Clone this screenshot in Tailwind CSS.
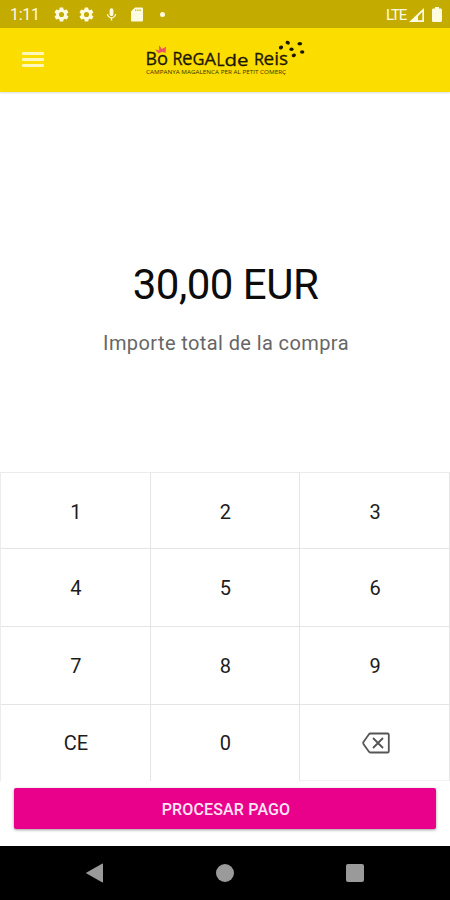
<!DOCTYPE html>
<html lang="ca">

<head>
  <meta charset="UTF-8">
  <meta name="viewport" content="width=device-width, initial-scale=1.0">
  <title>Bo Regal de Reis</title>
  <script src="https://cdn.jsdelivr.net/npm/@tailwindcss/browser@4"></script>
</head>

<body class="overflow-hidden bg-white font-['Roboto',sans-serif]">
  <div class="w-[450px] h-[900px] flex flex-col">

    <!-- status bar -->
    <div class="h-7 shrink-0 bg-[#c3ab00] flex items-center justify-between pl-[10px] pr-2 text-[#fffbe0]">
      <div class="flex items-center">
        <span class="w-[43px] pt-0.5 text-base leading-none tracking-[-0.3px]">1:11</span>
        <svg class="w-[17px] h-[17px] mt-px" viewBox="0 0 24 24" fill="currentColor">
          <path d="M19.4 13c0-.3.1-.6.1-1s0-.7-.1-1l2.1-1.6c.2-.2.3-.4.1-.7l-2-3.4c-.1-.2-.4-.3-.6-.2l-2.5 1c-.5-.4-1.1-.7-1.7-1l-.4-2.6c0-.3-.2-.5-.5-.5h-4c-.2 0-.4.2-.5.4l-.4 2.7c-.6.2-1.1.6-1.7 1l-2.400-1c-.2-.1-.5 0-.6.2l-2 3.400c-.1.200-.1.500.1.700L4.500 11c0 .300-.1.700-.1 1s0 .700.100 1l-2.100 1.600c-.2.200-.2.400-.1.700l2 3.400c.1.200.400.300.600.200l2.500-1c.5.400 1.100.700 1.700 1l.4 2.600c0 .300.300.500.500.500h4c.3 0 .5-.2.500-.5l.4-2.600c.6-.3 1.200-.6 1.700-1l2.500 1c.2.100.5 0 .6-.2l2-3.400c.1-.2.100-.5-.1-.7zM12 15.600a3.600 3.600 0 1 1 0-7.200 3.600 3.600 0 0 1 0 7.200z" />
        </svg>
        <svg class="w-[17px] h-[17px] mt-px ml-[8px]" viewBox="0 0 24 24" fill="currentColor">
          <path d="M19.4 13c0-.3.1-.6.1-1s0-.7-.1-1l2.1-1.6c.2-.2.3-.4.1-.7l-2-3.4c-.1-.2-.4-.3-.6-.2l-2.5 1c-.5-.4-1.1-.7-1.7-1l-.4-2.6c0-.3-.2-.5-.5-.5h-4c-.2 0-.4.2-.5.4l-.4 2.7c-.6.2-1.1.6-1.7 1l-2.400-1c-.2-.1-.5 0-.6.2l-2 3.400c-.1.200-.1.500.1.700L4.500 11c0 .300-.1.700-.1 1s0 .700.100 1l-2.100 1.600c-.2.200-.2.400-.1.700l2 3.400c.1.200.400.300.600.200l2.500-1c.5.400 1.100.700 1.700 1l.4 2.600c0 .300.300.500.500.500h4c.3 0 .5-.2.500-.5l.4-2.600c.6-.3 1.200-.6 1.700-1l2.500 1c.2.100.5 0 .6-.2l2-3.400c.1-.2.100-.5-.1-.7zM12 15.600a3.600 3.600 0 1 1 0-7.200 3.600 3.600 0 0 1 0 7.200z" />
        </svg>
        <svg class="w-[15px] h-[15px] mt-px ml-[9px]" viewBox="0 0 24 24" fill="currentColor">
          <path d="M12 14.500a3 3 0 0 0 3-3V5a3 3 0 0 0-6 0v6.500a3 3 0 0 0 3 3zm5.500-3.500c0 3-2.500 5.200-5.500 5.200S6.500 14 6.500 11H4.600c0 3.600 2.700 6.300 6.200 6.800V21.500h2.400v-3.700c3.500-.5 6.200-3.200 6.200-6.800z" />
        </svg>
        <svg class="w-3 h-[15px] ml-3" viewBox="0 0 12 15" fill="currentColor">
          <path fill-rule="evenodd" d="M4 .5h6.700c.8 0 1.300.5 1.300 1.300v11.400c0 .8-.5 1.300-1.300 1.300H1.300C.5 14.500 0 14 0 13.200V4.500zM4.200 2.600v1.300h1.100V2.600zM6.400 2.600v1.300h1.100V2.600zM8.600 2.600v1.300h1.100V2.600z" />
        </svg>
        <span class="size-[5px] rounded-full bg-current ml-[17px]"></span>
      </div>
      <div class="flex items-center">
        <span class="text-[15px] leading-none pt-0.5 tracking-[-1.2px]">LTE</span>
        <svg class="w-[15px] h-[14px] ml-[3px] mt-px" viewBox="0 0 15 14" fill="currentColor">
          <path fill-rule="evenodd" d="M15 0v14H0zM13.300 4v8.300H9V8.200z" />
        </svg>
        <svg class="w-[10px] h-[15px] ml-2" viewBox="0 0 10 15" fill="currentColor">
          <path d="M3 0h4v1.500h1.500C9.400 1.500 10 2.100 10 3v10.500c0 .9-.6 1.500-1.500 1.500h-7C.6 15 0 14.400 0 13.500V3c0-.9.6-1.500 1.500-1.500H3z" />
        </svg>
      </div>
    </div>

    <!-- app bar -->
    <header class="h-16 shrink-0 bg-[#fbdd00] flex items-start shadow-[0_1px_2px_rgba(0,0,0,0.15)]">
      <button class="ml-[22px] mt-6 w-[22px] flex flex-col gap-[3px]">
        <span class="h-[3px] w-full rounded-[1px] bg-[#fff8bc]"></span>
        <span class="h-[3px] w-full rounded-[1px] bg-[#fff8bc]"></span>
        <span class="h-[3px] w-full rounded-[1px] bg-[#fff8bc]"></span>
      </button>
      <svg class="ml-[100px] mt-2 w-[164px] h-[42px]" viewBox="144 36 164 42" fill="#1c1800">
        <g font-family="'Open Sans', sans-serif" stroke="#1c1800" stroke-width=".3">
          <text x="145.500" y="65" font-size="18" textLength="11.500" lengthAdjust="spacingAndGlyphs">B</text>
          <text x="157" y="65" font-size="19" textLength="11" lengthAdjust="spacingAndGlyphs">o</text>
          <text x="172.500" y="65" font-size="17.500" textLength="10" lengthAdjust="spacingAndGlyphs">R</text>
          <text x="182" y="65" font-size="20" textLength="10.500" lengthAdjust="spacingAndGlyphs">e</text>
          <text x="192.500" y="65" font-size="17" textLength="12" lengthAdjust="spacingAndGlyphs">G</text>
          <text x="204.500" y="65" font-size="16" textLength="11.500" lengthAdjust="spacingAndGlyphs">A</text>
          <text x="216.500" y="66" font-size="18" textLength="8" lengthAdjust="spacingAndGlyphs">L</text>
          <text x="224.500" y="65.500" font-size="17" textLength="24" lengthAdjust="spacingAndGlyphs">de</text>
          <text x="254" y="65" font-size="17" textLength="10" lengthAdjust="spacingAndGlyphs">R</text>
          <text x="263.500" y="65" font-size="18.500" textLength="24.500" lengthAdjust="spacingAndGlyphs">eis</text>
        </g>
        <text x="146" y="73.800" fill="#3a3300" font-family="'Open Sans', sans-serif" font-size="5" textLength="140" lengthAdjust="spacingAndGlyphs">CAMPANYA MAGALENCA PER AL PETIT COMERÇ</text>
        <!-- crown over the o -->
        <path fill="#ee5368" d="M158.500 53.300 155 49.500l4.200 1-.2-5.300 3 3.800 4-2.300-.4 6.300-3.300-1.200z" />
        <!-- confetti -->
        <ellipse cx="281" cy="47.500" rx="2.200" ry="1.800" transform="rotate(-25 281 47.500)" />
        <ellipse cx="287.700" cy="42.700" rx="2.200" ry="1.800" transform="rotate(25 287.700 42.700)" />
        <ellipse cx="291.500" cy="49.200" rx="2.100" ry="1.800" />
        <ellipse cx="293.800" cy="55.400" rx="2.200" ry="1.800" transform="rotate(-25 293.800 55.400)" />
        <ellipse cx="299.800" cy="43.800" rx="2.400" ry="1.700" />
        <ellipse cx="302.200" cy="52" rx="2.200" ry="1.700" />
      </svg>
    </header>

    <!-- amount -->
    <main class="h-[380px] shrink-0 flex flex-col items-center pt-[169px]">
      <p class="pl-px text-[42px] leading-[48px] tracking-[-0.5px] text-[#0c0c0c]">30,00 EUR</p>
      <p class="mt-[22px] pl-[2px] text-xl leading-6 tracking-[0.4px] text-[#666]">Importe total de la compra</p>
    </main>

    <!-- keypad -->
    <div class="h-[309px] shrink-0 grid grid-cols-3 grid-rows-[76px_78px_78px_76px] border-t border-l border-[#ececec] text-xl text-[#1c1c1c]">
      <button class="pl-px pt-0.5 border-r border-b border-[#e5e5e5]">1</button>
      <button class="pl-px pt-0.5 border-r border-b border-[#e5e5e5]">2</button>
      <button class="pl-px pt-0.5 border-r border-b border-[#e5e5e5]">3</button>
      <button class="pl-px border-r border-b border-[#e5e5e5]">4</button>
      <button class="pl-px border-r border-b border-[#e5e5e5]">5</button>
      <button class="pl-px border-r border-b border-[#e5e5e5]">6</button>
      <button class="pl-px border-r border-b border-[#e5e5e5]">7</button>
      <button class="pl-px border-r border-b border-[#e5e5e5]">8</button>
      <button class="pl-px border-r border-b border-[#e5e5e5]">9</button>
      <button class="pl-px border-r border-[#e5e5e5]">CE</button>
      <button class="pl-px border-r border-[#e5e5e5]">0</button>
      <button class="pl-[3px] border-r border-b border-b-[#f3f3f3] border-r-[#e5e5e5] flex items-center justify-center">
        <svg class="w-7 h-[22px]" viewBox="0 0 28 22" fill="none" stroke="#555" stroke-width="1.800" stroke-linejoin="round">
          <path d="M8.500 1.500H25.500c.8 0 1.300.5 1.300 1.300v16.400c0 .8-.5 1.300-1.300 1.300H8.500c-.8 0-1.300-.3-1.700-1L1.600 12.200c-.5-.8-.5-1.600 0-2.400L6.800 2.500c.4-.7.9-1 1.700-1zM11 6l10 10M21 6 11 16" />
        </svg>
      </button>
    </div>

    <div class="h-[65px] shrink-0 px-[14px] pt-[7px]">
      <button class="w-full h-[41px] pt-0.5 pl-0.5 rounded-xs bg-[#ea018b] text-[#ffe6f5] text-base tracking-[0.15px] font-medium shadow-[0_1px_3px_rgba(0,0,0,0.4)]">PROCESAR PAGO</button>
    </div>

    <!-- system navigation -->
    <nav class="h-[54px] shrink-0 bg-black flex items-center justify-between px-[86px]">
      <svg class="w-[17px] h-5" viewBox="0 0 17 20" fill="#9a9a9a">
        <path d="M16 .7c.6-.3 1 0 1 .6v17.400c0 .6-.4.900-1 .6L.600 10.600c-.6-.4-.6-.8 0-1.200z" />
      </svg>
      <span class="size-[18px] rounded-full bg-[#9a9a9a]"></span>
      <span class="size-[18px] rounded-xs bg-[#9a9a9a]"></span>
    </nav>
  </div>
</body>

</html>
